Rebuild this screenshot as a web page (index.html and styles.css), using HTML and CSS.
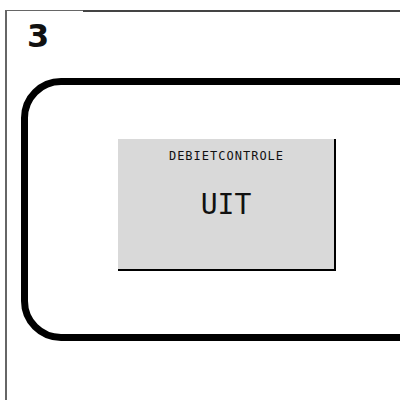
FILE: index.html
```html
<!DOCTYPE html>
<html lang="nl">
<head>
  <meta charset="UTF-8">
  <meta name="viewport" content="width=device-width, initial-scale=1.0">
  <title>Debietcontrole</title>
  <link rel="stylesheet" href="styles.css">
</head>
<body>
  <div class="panel">
    <div class="panel-head">
      <div class="tab">
        <h1 class="tab-title">3</h1>
      </div>
      <div class="tab-rest"></div>
    </div>
    <div class="frame">
      <div class="status-box">
        <span class="status-label">DEBIETCONTROLE</span>
        <span class="status-value">UIT</span>
      </div>
    </div>
  </div>
</body>
</html>
```

FILE: styles.css
```css
/* styles.css */
html, body {
    margin: 0;
    padding: 0;
    background-color: #fff;
    overflow: hidden;
}

body {
    font-family: "DejaVu Sans", sans-serif;
    width: 400px;
    height: 400px;
}

.panel {
    margin: 10px 0 0 5px;
    height: 390px;
    border-left: 2px solid #666;
    overflow: hidden;
}

.panel-head {
    display: flex;
}

.tab {
    width: 76px;
    border-top: 1px solid #666;
    padding: 9px 0 0 20px;
    box-sizing: border-box;
}

.tab-title {
    margin: 0;
    font-size: 32px;
    line-height: 32px;
    font-weight: bold;
    color: #111;
}

.tab-rest {
    flex: 1;
    border-top: 2px solid #444;
}

.frame {
    margin: 26px 0 0 14px;
    width: 420px;
    height: 263px;
    box-sizing: border-box;
    border: 7px solid #000;
    border-radius: 40px;
    padding: 54px 0 0 90px;
}

.status-box {
    width: 218px;
    height: 132px;
    box-sizing: border-box;
    background-color: #d9d9d9;
    border-right: 2px solid #000;
    border-bottom: 2px solid #000;
    padding-top: 10px;
    display: flex;
    flex-direction: column;
    align-items: center;
    font-family: "DejaVu Sans Mono", monospace;
    color: #111;
}

.status-label {
    font-size: 12px;
    line-height: 14px;
    letter-spacing: 1px;
    margin-left: 1px;
}

.status-value {
    margin-top: 26px;
    font-size: 28px;
    line-height: 32px;
}
```
